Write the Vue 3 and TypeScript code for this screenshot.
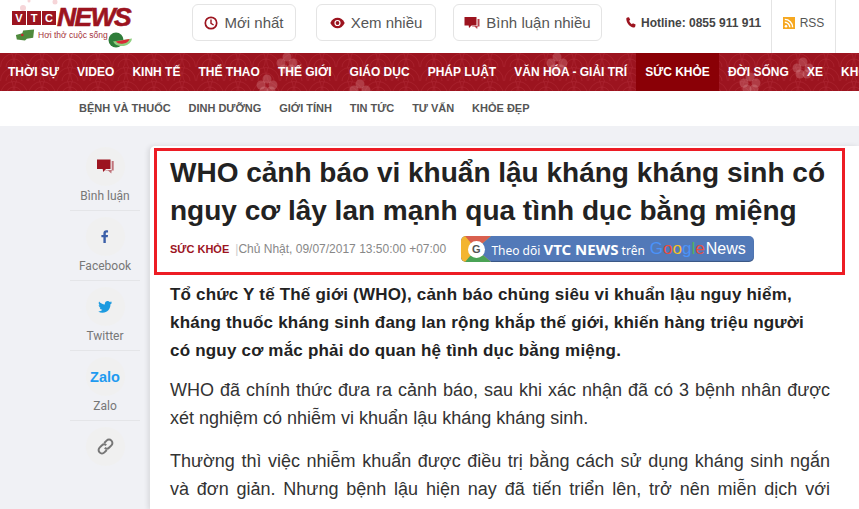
<script setup lang="ts">
const menu: { t: string; on?: boolean }[] = [
  { t: 'THỜI SỰ' }, { t: 'VIDEO' }, { t: 'KINH TẾ' }, { t: 'THỂ THAO' }, { t: 'THẾ GIỚI' }, { t: 'GIÁO DỤC' },
  { t: 'PHÁP LUẬT' }, { t: 'VĂN HÓA - GIẢI TRÍ' }, { t: 'SỨC KHỎE', on: true }, { t: 'ĐỜI SỐNG' }, { t: 'XE' }, { t: 'KHOA HỌC' },
]
const sub = ['BỆNH VÀ THUỐC', 'DINH DƯỠNG', 'GIỚI TÍNH', 'TIN TỨC', 'TƯ VẤN', 'KHỎE ĐẸP']
const flowers = [
  [287, 10], [267, 32], [360, 37], [557, 10], [750, 30], [803, 15],
]
</script>

<template>
  <div class="page">
    <header class="top">
      <div class="logo">
        <svg class="blossom" width="70" height="22" viewBox="0 0 70 22">
          <g fill="#f6d5d8">
            <circle cx="23" cy="8" r="3" /><circle cx="55" cy="2" r="2.5" /><circle cx="29" cy="1" r="1.5" />
          </g>
        </svg>
        <div class="brand">
          <span class="vtc"><i>V</i><i>T</i><i>C</i></span><span class="news">NEWS</span>
        </div>
        <div class="slogan">
          <svg width="20" height="14" viewBox="0 0 22 14"><path d="M1 7l7-2 1-3 12-1-1 9-7 1-2 2-9-1z" fill="#4f8a3c" /><circle cx="8" cy="7" r="1.4" fill="#c8252c" /></svg>
          <span>Hơi thở cuộc sống</span>
        </div>
        <svg class="melon" width="24" height="18" viewBox="0 0 24 18">
          <circle cx="8" cy="8" r="7.500" fill="#2f7d3a" />
          <path d="M5 9.500a10 8 0 0 0 19-3z" fill="#8fcf7f" />
          <path d="M7.500 9.500a8 6 0 0 0 14-2.500z" fill="#d92b35" />
        </svg>
      </div>
      <div class="pill first">
        <svg width="14" height="14" viewBox="0 0 14 14"><circle cx="7" cy="7" r="5.7" fill="none" stroke="#9c141f" stroke-width="1.7" /><path d="M7 3.6V7.4L9.6 9" fill="none" stroke="#9c141f" stroke-width="1.4" /></svg>
        <span>Mới nhất</span>
      </div>
      <div class="pill second">
        <svg width="15" height="12" viewBox="0 0 15 12"><path d="M.3 6C2 2.4 4.6.8 7.5.8S13 2.400 14.700 6C13 9.600 10.400 11.200 7.500 11.200S2 9.600.3 6z" fill="#9c141f" /><circle cx="7.500" cy="6" r="3.100" fill="#fff" /><circle cx="7.500" cy="6" r="1.900" fill="#9c141f" /></svg>
        <span>Xem nhiều</span>
      </div>
      <div class="pill third">
        <svg width="16" height="14" viewBox="0 0 16 14"><path d="M.5 1h12v8.500H7.500L5 12l-.3-2.500H.5z" fill="#9c141f" /><path d="M13.500 3h2v7.500h-2l-.3 2.500-2.700-2.500H8l.4-.4h5.100z" fill="#b8434c" /></svg>
        <span>Bình luận nhiều</span>
      </div>
      <div class="hotline">
        <svg width="10" height="11" viewBox="0 0 10 11"><path d="M1.300.6 3 .2l1.200 2.500-1 1c.5 1.500 1.400 2.700 2.700 3.500l1-.9L9.600 7.600 9.200 9.500c-.2.700-.9 1.100-1.700 1C3.800 9.800.7 6.300.3 2.200.3 1.500.7.800 1.300.6z" fill="#9c141f" /></svg>
        <span>Hotline: 0855 911 911</span>
      </div>
      <div class="rss">
        <svg width="12" height="12" viewBox="0 0 12 12"><rect width="12" height="12" fill="#f6a821" /><circle cx="3" cy="9.200" r="1.300" fill="#fff" /><path d="M1.800 5.200a5 5 0 0 1 5 5M1.800 2.400a7.800 7.800 0 0 1 7.800 7.800" fill="none" stroke="#fff" stroke-width="1.400" /></svg>
        <span>RSS</span>
      </div>
    </header>

    <nav class="menu">
      <svg class="pattern" width="859" height="38" aria-hidden="true">
        <defs>
          <pattern id="waves" width="28" height="14" patternUnits="userSpaceOnUse">
            <g fill="none" stroke="#b02a35" stroke-opacity=".5">
              <circle cx="14" cy="14" r="13.500" /><circle cx="14" cy="14" r="8" />
              <circle cx="0" cy="7" r="13.500" /><circle cx="28" cy="7" r="13.500" />
            </g>
          </pattern>
        </defs>
        <rect width="859" height="38" fill="url(#waves)" />
        <g v-for="f in flowers" :key="f[0]" fill="#e6a6aa" fill-opacity=".28">
          <circle :cx="f[0]" :cy="f[1] - 6" r="4.500" /><circle :cx="f[0] + 6" :cy="f[1]" r="4.500" />
          <circle :cx="f[0] - 6" :cy="f[1]" r="4.500" /><circle :cx="f[0] - 3" :cy="f[1] + 6" r="4.500" /><circle :cx="f[0] + 4" :cy="f[1] + 6" r="4.500" />
        </g>
      </svg>
      <a v-for="m in menu" :key="m.t" class="item" :class="{ on: m.on }">{{ m.t }}</a>
    </nav>

    <div class="sub">
      <a v-for="s in sub" :key="s">{{ s }}</a>
    </div>

    <main class="body">
      <aside class="share">
        <div class="sh">
          <span class="disc">
            <svg width="17" height="15" viewBox="0 0 17 15"><path d="M0 .5h13.500v9.500H9l-2.800 3-.5-3H0z" fill="#9c141f" /><path d="M14.700 2h2v9.500h-2l-.4 3-3.300-3H7.800l1.200-.5h5.700z" fill="#c0737a" /></svg>
          </span>
          <label>Bình luận</label>
        </div>
        <div class="sh">
          <span class="disc"><svg width="8" height="15" viewBox="0 0 10 16"><path d="M3 16V9H.5V6H3V4C3 1.500 4.500.3 6.600.3c1 0 1.900.1 2.200.1V3H7.400C6.200 3 6 3.600 6 4.400V6h2.800l-.4 3H6v7z" fill="#3b5fa8" /></svg></span>
          <label>Facebook</label>
        </div>
        <div class="sh">
          <span class="disc"><svg width="14" height="12" viewBox="0 0 24 21"><path d="M24 2.400c-.9.400-1.800.7-2.800.8 1-.6 1.800-1.600 2.200-2.700-1 .6-2 1-3.100 1.200C19.300.6 18 0 16.600 0c-2.700 0-4.900 2.200-4.900 4.900 0 .4 0 .8.100 1.100C7.700 5.800 4.100 3.900 1.700.9 1.200 1.600 1 2.500 1 3.400c0 1.700.9 3.200 2.200 4.100-.8 0-1.600-.2-2.200-.6v.1c0 2.400 1.700 4.400 3.900 4.800-.7.200-1.500.2-2.200.1.600 2 2.400 3.400 4.600 3.400C5.600 17.500 3.400 18.300 1 18.300H0c2.200 1.400 4.800 2.200 7.500 2.200 9.100 0 14-7.500 14-14v-.6c1-.7 1.800-1.500 2.500-2.500z" fill="#1d9be0" /></svg></span>
          <label>Twitter</label>
        </div>
        <div class="sh">
          <span class="disc zalo">Zalo</span>
          <label>Zalo</label>
        </div>
        <div class="sh last">
          <span class="disc"><svg width="17" height="17" viewBox="0 0 17 17" fill="none" stroke="#777" stroke-width="2"><path d="M7.200 5 9.600 2.600a2.900 2.900 0 0 1 4.800 4.800L12 9.800a2.900 2.900 0 0 1-4.200 0" /><path d="M9.800 12 7.400 14.400a2.900 2.900 0 0 1-4.800-4.800L5 7.200a2.900 2.900 0 0 1 4.200 0" /></svg></span>
        </div>
      </aside>

      <article class="article">
        <div class="headbox">
          <h1>WHO cảnh báo vi khuẩn lậu kháng kháng sinh có nguy cơ lây lan mạnh qua tình dục bằng miệng</h1>
          <div class="meta">
            <b>SỨC KHỎE</b><em>|</em><span class="date">Chủ Nhật, 09/07/2017 13:50:00 +07:00</span>
            <div class="gnews">
              <span class="gside">
                <svg class="gbg" width="30" height="26" viewBox="0 0 30 26"><rect width="30" height="26" fill="#f3b52f" /><path d="M4 0H30L15 13z" fill="#d9604f" /><path d="M4 26H30L15 13z" fill="#4aa356" /><path d="M15 13 30 0V26z" fill="#5279b8" /></svg>
                <span class="g">G</span>
              </span>
              <span class="gtext">Theo dõi <b>VTC NEWS</b> trên</span>
              <span class="gword"><i class="c1">G</i><i class="c2">o</i><i class="c3">o</i><i class="c1">g</i><i class="c4">l</i><i class="c2">e</i></span>
              <span class="gnw">News</span>
            </div>
          </div>
        </div>
        <p class="lead">Tổ chức Y tế Thế giới (WHO), cảnh báo chủng siêu vi khuẩn lậu nguy hiểm, kháng thuốc kháng sinh đang lan rộng khắp thế giới, khiến hàng triệu người có nguy cơ mắc phải do quan hệ tình dục bằng miệng.</p>
        <p>WHO đã chính thức đưa ra cảnh báo, sau khi xác nhận đã có 3 bệnh nhân được xét nghiệm có nhiễm vi khuẩn lậu kháng kháng sinh.</p>
        <p>Thường thì việc nhiễm khuẩn được điều trị bằng cách sử dụng kháng sinh ngắn và đơn giản. Nhưng bệnh lậu hiện nay đã tiến triển lên, trở nên miễn dịch với kháng sinh thông thường.</p>
      </article>
    </main>
  </div>
</template>

<style>
html, body { margin: 0; overflow: hidden; background: #f0f1f5; }
</style>

<style scoped>
.page { width: 859px; height: 509px; overflow: hidden; font-family: "Liberation Sans", Arial, sans-serif; color: #222; }
.top { height: 53px; background: #fff; display: flex; align-items: center; position: relative; }
.logo { width: 192px; height: 53px; flex: none; position: relative; box-sizing: border-box; padding: 8px 0 0 12px; }
.blossom { position: absolute; left: 0; top: 0; }
.brand { display: flex; align-items: center; height: 19px; position: relative; }
.vtc { display: flex; gap: 1px; }
.vtc i { width: 14px; height: 14px; background: #9c141f; color: #fff; font: 700 11px/14px "Liberation Sans", sans-serif; text-align: center; }
.news { font: italic 700 25px/19px "Liberation Sans", sans-serif; color: #9c141f; -webkit-text-stroke: .6px #9c141f; letter-spacing: -1.500px; margin-left: 1px; transform-origin: left; transform: scaleX(1.060); }
.slogan { display: flex; align-items: center; gap: 3px; font-size: 8.500px; color: #a5323a; margin: 1px 0 0 3px; line-height: 12px; }
.melon { position: absolute; left: 108px; top: 32px; }
.pill { height: 37px; border: 1px solid #e4e4e4; border-radius: 6px; box-sizing: border-box; display: flex; align-items: center; justify-content: center; gap: 6px; font: 15px "Liberation Sans", sans-serif; color: #555; flex: none; margin-top: -8px; }
.first { width: 104px; }
.second { width: 120px; margin-left: 20px; }
.third { width: 149px; margin-left: 17px; }
.hotline { margin-left: 24px; display: flex; align-items: center; gap: 5px; font-size: 12px; font-weight: 700; color: #444; width: 145px; flex: none; margin-top: -8px; }
.rss { height: 53px; width: 65px; flex: none; box-sizing: border-box; border-left: 1px solid #e4e4e4; border-right: 1px solid #e4e4e4; display: flex; align-items: center; justify-content: center; gap: 5px; font-size: 12px; color: #555; padding-bottom: 8px; }
.menu { height: 38px; background: #9c141f; display: flex; position: relative; overflow: hidden; white-space: nowrap; }
.pattern { position: absolute; left: 0; top: 0; }
.item { position: relative; font-size: 12px; font-weight: 700; line-height: 38px; color: #fff; padding: 0 9.050px; flex: none; }
.item:first-of-type { padding-left: 8px; }
.item.on { background: #8a0006; }
.sub { height: 35px; box-sizing: border-box; padding-bottom: 2px; background: #fff; display: flex; align-items: center; gap: 17.800px; padding-left: 79px; font-size: 11px; font-weight: 700; color: #555; }
.body { display: flex; height: 383px; align-items: flex-start; padding-top: 21px; box-sizing: border-box; }
.share { width: 70px; margin-left: 70px; flex: none; font-family: Roboto, sans-serif; }
.sh { height: 64px; margin-bottom: 6px; display: flex; flex-direction: column; align-items: center; border-bottom: 1px solid #e4e5e8; box-sizing: border-box; }
.sh.last { border-bottom: 0; }
.disc { width: 39px; height: 39px; border-radius: 50%; background: #f0f0f0; display: flex; align-items: center; justify-content: center; flex: none; }
.sh label { font-size: 12px; line-height: 16px; color: #777; margin-top: 2px; }
.zalo { font: 700 14.500px "Liberation Sans", sans-serif; color: #1f9bf0; }
.article { margin: -1px 0 0 10px; width: 709px; height: 364px; background: #fff; border-radius: 5px 0 0 0; box-shadow: -2px 0 5px rgba(0,0,0,.1); padding: 2px 0 0 4px; box-sizing: border-box; }
.headbox { width: 691px; height: 127px; border: 3px solid #ed1c24; box-sizing: border-box; padding: 3px 0 0 13px; }
h1 { margin: 0; font-size: 28px; line-height: 38px; font-weight: 700; color: #222; width: 670px; }
.meta { display: flex; align-items: center; margin-top: 6px; height: 26px; font-size: 12px; color: #888; }
.meta > b { font-size: 11px; color: #9c141f; }
.meta em { font-style: normal; color: #ccc; margin: 0 0 0 6px; }
.date { width: 223px; flex: none; }
.gnews { width: 293px; height: 26px; background: #5279b8; border-radius: 5px; display: flex; align-items: center; position: relative; overflow: hidden; color: #fff; box-shadow: inset 0 -1px 1px rgba(0,0,0,.3); flex: none; }
.gside { width: 30px; height: 26px; flex: none; display: flex; align-items: center; justify-content: center; position: relative; }
.gbg { position: absolute; left: 0; top: 0; }
.g { position: relative; width: 17px; height: 17px; border-radius: 50%; background: #fff; color: #555; font: 700 11px/17px "Liberation Sans", sans-serif; text-align: center; }
.gtext { white-space: nowrap; font-family: "Noto Sans", sans-serif; font-size: 12px; }
.gtext b { font-size: 15px; }
.gword { margin-left: 5px; font: 17px "Liberation Sans", sans-serif; }
.gword i { font-style: normal; }
.c1 { color: #4a93fa; } .c2 { color: #ea4c3c; } .c3 { color: #f4c02a; } .c4 { color: #52b463; }
.gnw { margin-left: 1px; font: 16px "Liberation Sans", sans-serif; }
p { margin: 0 0 0 16px; width: 660px; font-size: 18px; line-height: 28px; color: #333; text-align: justify; }
.lead { width: 655px; font-size: 17px; font-weight: 700; color: #222; margin-top: 6px; margin-bottom: 11px; text-align: left; letter-spacing: .2px; }
p + p { margin-bottom: 15px; }
</style>
